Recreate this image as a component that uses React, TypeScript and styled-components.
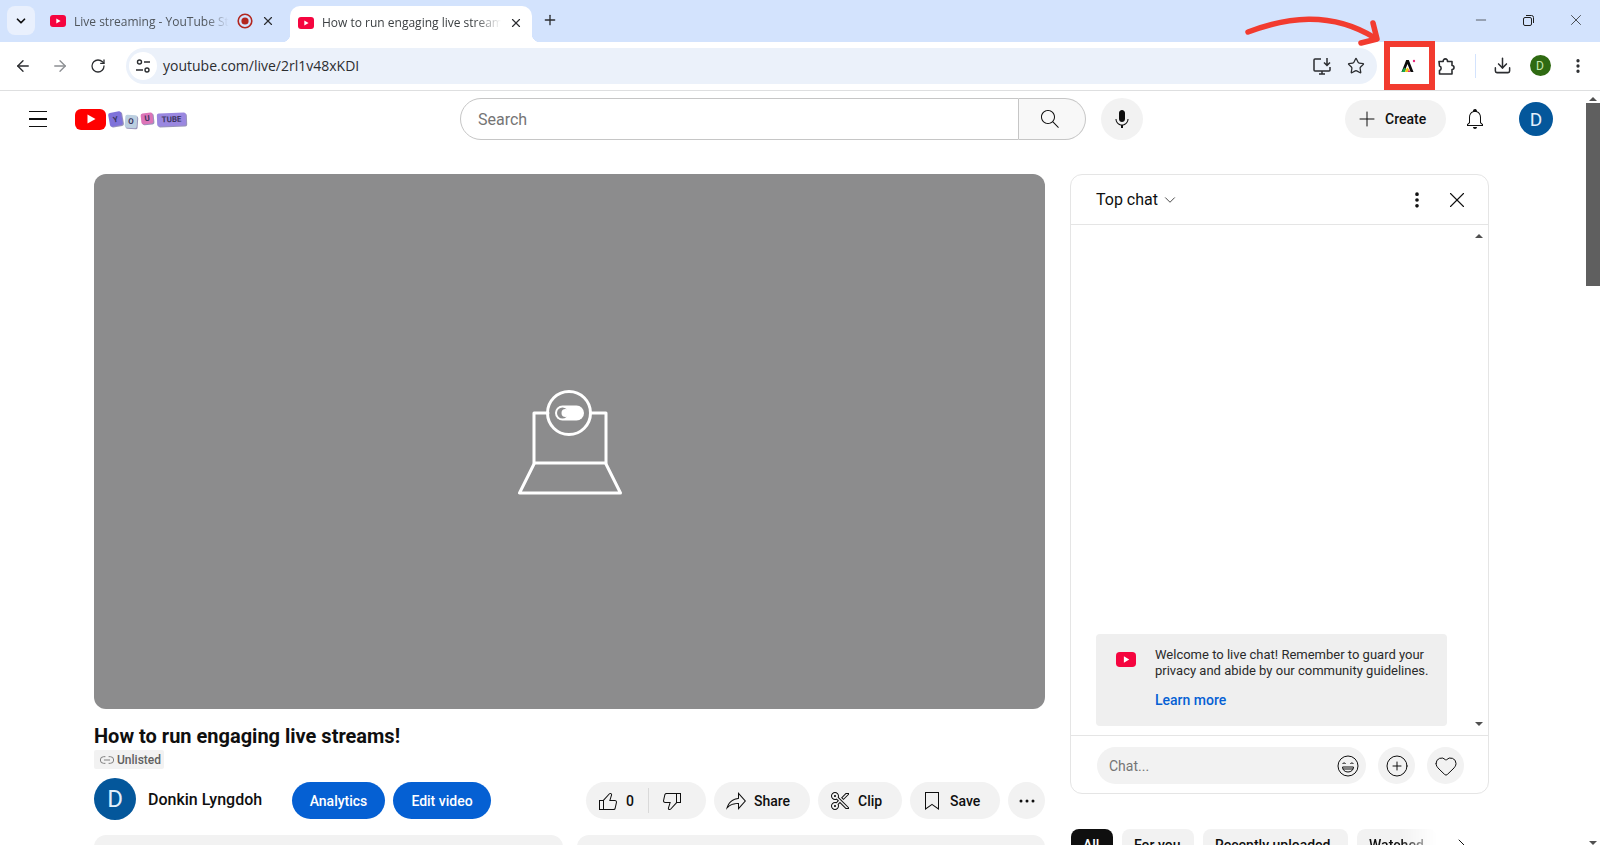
import styled, { createGlobalStyle } from "styled-components"
import {
  ArrowLeft,
  ArrowRight,
  ChevronDown,
  ChevronRight,
  CirclePlus,
  Download,
  EllipsisVertical,
  Heart,
  Link2,
  Minus,
  Plus,
  RotateCw,
  Star,
  X,
} from "lucide-react"

const GlobalStyle = createGlobalStyle`
  html, body {
    margin: 0;
    height: 100%;
    overflow: hidden;
    background: #fff;
  }
  * {
    box-sizing: border-box;
  }
`

const paths = {
  like: "M18.77,11h-4.23l1.52-4.94C16.38,5.03,15.54,4,14.38,4c-0.58,0-1.14,0.24-1.52,0.65L7,11H3v10h4h1h9.43 c1.06,0,1.98-0.67,2.19-1.61l1.34-6C21.23,12.15,20.18,11,18.77,11z M7,20H4v-8h3V20z M19.98,13.17l-1.34,6 C18.54,19.65,18.03,20,17.43,20H8v-8.61l5.6-6.06C13.79,5.12,14.08,5,14.38,5c0.26,0,0.5,0.11,0.63,0.3 c0.07,0.1,0.15,0.26,0.09,0.47l-1.52,4.94L13.18,12h1.35h4.23c0.41,0,0.8,0.17,1.03,0.46C19.92,12.61,20.05,12.86,19.98,13.17z",
  dislike:
    "M17,4h-1H6.57C5.5,4,4.59,4.67,4.38,5.61l-1.34,6C2.77,12.85,3.82,14,5.23,14h4.23l-1.52,4.94C7.62,19.97,8.46,21,9.62,21 c0.58,0,1.14-0.24,1.52-0.65L17,14h4V4H17z M10.4,19.67C10.21,19.88,9.92,20,9.62,20c-0.26,0-0.5-0.11-0.63-0.3 c-0.07-0.1-0.15-0.26-0.09-0.47l1.52-4.94l0.4-1.29H9.46H5.23c-0.41,0-0.8-0.17-1.03-0.46c-0.12-0.15-0.25-0.4-0.18-0.72l1.34-6 C5.46,5.35,5.97,5,6.57,5H16v8.61L10.4,19.67z M20,13h-3V5h3V13z",
  share:
    "M15 5.63 20.66 12 15 18.37V14h-1c-3.96 0-7.14 1-9.75 3.09 1.84-4.07 5.11-6.4 9.89-7.1l.86-.13V5.63M14 3v6C6.22 10.13 3.11 15.33 2 21c2.78-3.97 6.44-6 12-6v6l8-9-8-9z",
  bookmark: "M18 4v15.06l-5.42-3.87-.58-.42-.58.42L6 19.06V4h12m1-1H5v18l7-5 7 5V3z",
  clip: "M8 7c0-.55-.45-1-1-1s-1 .45-1 1 .45 1 1 1 1-.45 1-1zm-1 9c-.55 0-1 .45-1 1s.45 1 1 1 1-.45 1-1-.45-1-1-1zm3.79-7.77L21 18.44V20h-3.27l-5.76-5.76-1.27 1.27c.19.46.3.96.3 1.49 0 2.21-1.79 4-4 4s-4-1.79-4-4 1.79-4 4-4c.42 0 .81.08 1.19.2l1.37-1.37-1.11-1.11C8 10.89 7.51 11 7 11c-2.21 0-4-1.79-4-4s1.79-4 4-4 4 1.79 4 4c0 .43-.09.84-.21 1.23zm-.71.71-.43-.44.19-.58c.11-.34.16-.64.16-.92 0-1.65-1.35-3-3-3S4 5.35 4 7s1.35 3 3 3c.36 0 .73-.07 1.09-.21l.61-.24.46.46 1.11 1.11.71.71-.71.71-1.37 1.37-.43.43-.58-.18C7.55 14.05 7.27 14 7 14c-1.65 0-3 1.35-3 3s1.35 3 3 3 3-1.35 3-3c0-.38-.07-.75-.22-1.12l-.25-.61.47-.47 1.27-1.27.71-.71.71.71L18.15 19H20v-.15l-9.92-9.91zM17.73 4H21v1.56l-5.52 5.52-2.41-2.41L17.73 4zm.42 1-3.67 3.67 1 1L20 5.15V5h-1.85z",
  bell: "M10 20h4c0 1.1-.9 2-2 2s-2-.9-2-2zm10-2.65V19H4v-1.65l2-1.88v-5.15C6 7.4 7.56 5.1 10 4.34v-.38c0-1.42 1.49-2.5 2.99-1.76.65.32 1.01 1.03 1.01 1.76v.39c2.44.75 4 3.06 4 5.98v5.15l2 1.87zm-1 .42-2-1.88v-5.47c0-2.47-1.19-4.36-3.13-5.1-1.26-.53-2.64-.5-3.84.03C8.15 6.11 7 7.99 7 10.42v5.47l-2 1.88V18h14v-.23z",
  search:
    "M20.87 20.17l-5.59-5.59C16.35 13.35 17 11.75 17 10c0-3.87-3.13-7-7-7s-7 3.13-7 7 3.13 7 7 7c1.75 0 3.35-.65 4.58-1.71l5.59 5.59.7-.71zM10 16c-3.31 0-6-2.69-6-6s2.69-6 6-6 6 2.69 6 6-2.69 6-6 6z",
  mic: "M12 3C10.34 3 9 4.37 9 6.07V11.93C9 13.63 10.34 15 12 15C13.66 15 15 13.63 15 11.93V6.07C15 4.37 13.66 3 12 3ZM18.5 12H17.5C17.5 15.03 15.03 17.5 12 17.5C8.97 17.5 6.5 15.03 6.5 12H5.5C5.5 15.24 7.89 17.93 11 18.41V21H13V18.41C16.11 17.93 18.5 15.24 18.5 12Z",
}

const Screen = styled.div`
  position: relative;
  display: flex;
  flex-direction: column;
  width: 1600px;
  height: 845px;
  overflow: hidden;
  font-family: Roboto, "Liberation Sans", sans-serif;
  color: #0f0f0f;
`

/* ---------- browser chrome ---------- */

const TabStrip = styled.div`
  display: flex;
  flex: none;
  align-items: flex-end;
  height: 42px;
  padding-left: 7px;
  background: #d3e3fd;
  font-family: "Open Sans", "Liberation Sans", sans-serif;
  font-size: 12px;
`

const TabSearch = styled.div`
  display: flex;
  align-items: center;
  justify-content: center;
  align-self: flex-start;
  width: 28px;
  height: 29px;
  margin-top: 6px;
  margin-right: 7px;
  border-radius: 8px;
  background: #e9f0fd;
`

const Tab = styled.div<{ $active?: boolean }>`
  position: relative;
  display: flex;
  align-items: center;
  gap: 8px;
  width: 242px;
  height: 36px;
  margin-right: 6px;
  padding: 0 9px 6px 8px;
  border-radius: 10px 10px 0 0;
  background: ${(p) => (p.$active ? "#fff" : "transparent")};
  color: ${(p) => (p.$active ? "#3c4043" : "#50565c")};

  ${(p) =>
    p.$active &&
    `
    padding-bottom: 3px;
    &::before, &::after {
      content: "";
      position: absolute;
      bottom: 0;
      width: 8px;
      height: 8px;
    }
    &::before {
      left: -8px;
      background: radial-gradient(circle at 0 0, transparent 8px, #fff 8.5px);
    }
    &::after {
      right: -8px;
      background: radial-gradient(circle at 100% 0, transparent 8px, #fff 8.5px);
    }
  `}
`

const TabTitle = styled.span`
  flex: 1;
  min-width: 0;
  overflow: hidden;
  white-space: nowrap;
  -webkit-mask-image: linear-gradient(to right, #000 85%, transparent);
  mask-image: linear-gradient(to right, #000 85%, transparent);
`

const NewTab = styled.div`
  display: flex;
  align-self: center;
  margin-left: 4px;
  margin-top: -2px;
`

const WindowControls = styled.div`
  display: flex;
  align-self: flex-start;
  align-items: center;
  gap: 31px;
  height: 40px;
  margin-left: auto;
  padding-right: 15px;
`

const Toolbar = styled.div`
  display: flex;
  flex: none;
  align-items: center;
  height: 49px;
  padding: 0 4px 1px 5px;
  border-bottom: 1px solid #dedfe0;
  border-radius: 8px 8px 0 0;
  background: #fff;
`

const ToolButton = styled.div<{ $width?: number; $dim?: boolean }>`
  display: flex;
  flex: none;
  align-items: center;
  justify-content: center;
  width: ${(p) => p.$width ?? 36}px;
  height: 36px;
  color: ${(p) => (p.$dim ? "#8c8f93" : "#2b2d30")};
`

const Omnibox = styled.div`
  display: flex;
  flex: 1;
  align-items: center;
  height: 36px;
  margin: 0 13px 0 9px;
  padding: 0 4px 0 3px;
  border-radius: 18px;
  background: #ebf1fa;
`

const SiteChip = styled.div`
  display: flex;
  align-items: center;
  justify-content: center;
  width: 28px;
  height: 28px;
  border-radius: 50%;
  background: #fff;
`

const Url = styled.span`
  flex: 1;
  margin-left: 6px;
  font-family: "Open Sans", "Liberation Sans", sans-serif;
  font-size: 14px;
  color: #2b2d30;
`

const ToolDivider = styled.div`
  width: 1px;
  height: 24px;
  margin: 0 8px 0 9px;
  background: #d3e3fd;
`

const ProfileDot = styled.div`
  display: flex;
  align-items: center;
  justify-content: center;
  width: 21px;
  height: 21px;
  border-radius: 50%;
  background: #2f6a12;
  color: #c6e8b0;
  font-size: 12px;
`

/* ---------- annotation ---------- */

const Highlight = styled.div`
  position: absolute;
  top: 41px;
  left: 1384px;
  width: 51px;
  height: 49px;
  border: 6px solid #f23b2f;
  pointer-events: none;
`

const Pointer = styled.svg`
  position: absolute;
  top: 10px;
  left: 1240px;
  width: 145px;
  height: 40px;
`

/* ---------- page ---------- */

const Page = styled.div`
  display: flex;
  flex: 1;
  min-height: 0;
`

const PageContent = styled.div`
  display: flex;
  flex: 1;
  flex-direction: column;
  min-width: 0;
`

const PageScrollbar = styled.div`
  display: flex;
  flex: none;
  flex-direction: column;
  justify-content: space-between;
  align-items: center;
  width: 15px;
`

const ScrollThumb = styled.div`
  width: 14px;
  height: 183px;
  margin-top: 2px;
  margin-left: 1px;
  background: #5f5f5f;
`

const ScrollColumn = styled.div`
  display: flex;
  flex-direction: column;
  align-items: center;
`

const Arrow = styled.div<{ $down?: boolean }>`
  flex: none;
  width: 0;
  height: 0;
  margin-top: 6px;
  border-left: 4px solid transparent;
  border-right: 4px solid transparent;
  ${(p) => (p.$down ? "border-top" : "border-bottom")}: 4px solid #505050;
`

const Masthead = styled.header`
  display: flex;
  flex: none;
  align-items: center;
  height: 56px;
  padding-right: 32px;
`

const MastLeft = styled.div`
  display: flex;
  align-items: center;
  width: 460px;
  padding-left: 20px;
`

const Burger = styled.div`
  display: flex;
  flex-direction: column;
  gap: 6px;
  width: 36px;
  padding: 0 9px;

  span {
    height: 1.5px;
    background: #0f0f0f;
  }
`

const Logo = styled.div`
  display: flex;
  align-items: center;
  margin-left: 19px;
`

const PlayBadge = styled.div`
  display: flex;
  align-items: center;
  justify-content: center;
  width: 31px;
  height: 21px;
  margin-right: 3px;
  border-radius: 6px;
  background: #ff0000;
`

const Keycap = styled.span<{ $bg: string; $w: number; $h: number; $tilt: number; $gap: number; $shift: number }>`
  display: flex;
  align-items: center;
  justify-content: center;
  width: ${(p) => p.$w}px;
  height: ${(p) => p.$h}px;
  margin-right: ${(p) => p.$gap}px;
  border-radius: 2px;
  background: ${(p) => p.$bg};
  box-shadow: 1px 1px 0 rgba(70, 60, 130, 0.55);
  color: #3a3560;
  font-size: 8px;
  font-weight: 700;
  transform: translateY(${(p) => p.$shift}px) rotate(${(p) => p.$tilt}deg);
`

const SearchBox = styled.div`
  display: flex;
  align-items: center;
  width: 559px;
  height: 42px;
  padding-left: 17px;
  border: 1px solid #c6c6c6;
  border-radius: 21px 0 0 21px;
  font-size: 16px;
  color: #757575;
`

const SearchButton = styled.div`
  display: flex;
  align-items: center;
  justify-content: center;
  width: 67px;
  height: 42px;
  padding-right: 4px;
  border: 1px solid #c6c6c6;
  border-left: none;
  border-radius: 0 21px 21px 0;
  background: #f8f8f8;
`

const RoundButton = styled.div<{ $size: number; $left?: number }>`
  display: flex;
  flex: none;
  align-items: center;
  justify-content: center;
  width: ${(p) => p.$size}px;
  height: ${(p) => p.$size}px;
  margin-left: ${(p) => p.$left ?? 0}px;
  border-radius: 50%;
  background: #f2f2f2;
`

const MastRight = styled.div`
  display: flex;
  align-items: center;
  margin-left: auto;
`

const CreateButton = styled.div`
  display: flex;
  align-items: center;
  gap: 6px;
  width: 101px;
  height: 38px;
  padding-left: 10px;
  border-radius: 19px;
  background: #f2f2f2;
  font-size: 14px;
  font-weight: 500;
`

const BellButton = styled.div`
  display: flex;
  justify-content: center;
  width: 40px;
  margin: 0 24px 0 9px;
`

const Avatar = styled.div<{ $size: number; $font: number }>`
  display: flex;
  flex: none;
  align-items: center;
  justify-content: center;
  width: ${(p) => p.$size}px;
  height: ${(p) => p.$size}px;
  border-radius: 50%;
  background: #04579b;
  color: #e3f0fb;
  font-size: ${(p) => p.$font}px;
`

const Body = styled.div`
  display: flex;
  gap: 25px;
  padding: 27px 0 0 94px;
`

const Primary = styled.main`
  flex: none;
  width: 951px;
`

const Player = styled.div`
  display: flex;
  align-items: center;
  justify-content: center;
  height: 535px;
  border-radius: 12px;
  background: #8c8c8d;
`

const Title = styled.h1`
  margin: 13px 0 0;
  font-size: 20px;
  font-weight: 700;
  line-height: 28px;
`

const Badge = styled.div`
  display: inline-flex;
  align-items: center;
  gap: 2px;
  height: 19px;
  padding: 0 3px 0 5px;
  border-radius: 2px;
  background: #f2f2f2;
  color: #606060;
  font-size: 12px;
  font-weight: 500;
  vertical-align: top;
`

const OwnerRow = styled.div`
  display: flex;
  align-items: center;
  height: 42px;
  margin-top: 9px;
`

const OwnerName = styled.div`
  width: 144px;
  margin-left: 12px;
  font-size: 16px;
  font-weight: 500;
`

const OwnerButton = styled.div<{ $width: number }>`
  display: flex;
  align-items: center;
  justify-content: center;
  width: ${(p) => p.$width}px;
  height: 37px;
  margin-top: 3px;
  margin-right: 8px;
  border-radius: 19px;
  background: #0560d3;
  color: #fff;
  font-size: 14px;
  font-weight: 500;
`

const Actions = styled.div`
  display: flex;
  gap: 8px;
  margin-top: 3px;
  margin-left: auto;
`

const Pill = styled.div<{ $width: number }>`
  display: flex;
  align-items: center;
  gap: 6px;
  width: ${(p) => p.$width}px;
  height: 37px;
  padding-left: 10px;
  border-radius: 19px;
  background: #f2f2f2;
  font-size: 14px;
  font-weight: 500;
`

const LikeDivider = styled.div`
  width: 1px;
  height: 25px;
  margin: 0 5px 0 8px;
  background: #d9d9d9;
`

const Recommendations = styled.div`
  display: flex;
  gap: 14px;
  margin-top: 15px;
`

const RecCard = styled.div`
  flex: 1;
  height: 80px;
  border-radius: 12px;
  background: #f2f2f2;
`

const Secondary = styled.aside`
  flex: none;
  width: 419px;
`

const ChatPanel = styled.section`
  display: flex;
  flex-direction: column;
  height: 620px;
  border: 1px solid #e5e5e5;
  border-radius: 12px;
`

const ChatHeader = styled.div`
  display: flex;
  flex: none;
  align-items: center;
  height: 50px;
  padding: 0 18px 0 25px;
  border-bottom: 1px solid #e5e5e5;
  font-size: 16px;
`

const ChatMenu = styled.div`
  display: flex;
  margin-left: auto;
  margin-right: 17px;
`

const ChatBody = styled.div`
  display: flex;
  flex: 1;
  min-height: 0;
`

const ChatFeed = styled.div`
  display: flex;
  flex: 1;
  align-items: flex-end;
  padding: 0 0 9px 25px;
`

const ChatScroll = styled(ScrollColumn)`
  justify-content: space-between;
  width: 18px;
  padding: 3px 0 9px;
  margin-left: 20px;
`

const Welcome = styled.div`
  display: flex;
  width: 351px;
  height: 92px;
  padding: 13px 16px 0 20px;
  border-radius: 4px;
  background: #efefef;
  font-size: 13px;
  line-height: 16px;
  color: #2a2a2a;
`

const WelcomeIcon = styled.div`
  display: flex;
  flex: none;
  width: 39px;
  padding-top: 5px;
`

const LearnMore = styled.div`
  margin-top: 11px;
  color: #065fd4;
  font-size: 14px;
  font-weight: 500;
  line-height: 20px;
`

const ChatFooter = styled.div`
  display: flex;
  flex: none;
  gap: 12px;
  height: 58px;
  padding: 11px 0 0 26px;
  border-top: 1px solid #e5e5e5;
`

const ChatInput = styled.div`
  display: flex;
  align-items: center;
  justify-content: space-between;
  width: 269px;
  height: 37px;
  padding: 0 6px 0 12px;
  border-radius: 19px;
  background: #f2f2f2;
  color: #757575;
  font-size: 14px;
`

const ChipRow = styled.div`
  display: flex;
  align-items: flex-start;
  gap: 9px;
  margin-top: 35px;
  margin-left: 1px;
`

const Chip = styled.div<{ $active?: boolean; $fade?: boolean; $width: number }>`
  flex: none;
  width: ${(p) => p.$width}px;
  height: 32px;
  padding-left: 12px;
  border-radius: 8px;
  overflow: hidden;
  white-space: nowrap;
  background: ${(p) => (p.$active ? "#0f0f0f" : "#f2f2f2")};
  color: ${(p) => (p.$active ? "#fff" : "#0f0f0f")};
  font-size: 14px;
  font-weight: 500;
  line-height: 32px;
  ${(p) =>
    p.$fade &&
    `
    -webkit-mask-image: linear-gradient(to right, #000 55%, transparent);
    mask-image: linear-gradient(to right, #000 55%, transparent);
  `}
`

const ChipNext = styled.div`
  display: flex;
  margin-left: 4px;
  margin-top: 5px;
`

const Glyph = styled.svg<{ $size: number }>`
  display: block;
  flex: none;
  width: ${(p) => p.$size}px;
  height: ${(p) => p.$size}px;
  fill: currentColor;
`

const YtIcon = ({ d, size = 24 }: { d: string; size?: number }) => (
  <Glyph viewBox='0 0 24 24' $size={size}>
    <path d={d} />
  </Glyph>
)

const Favicon = () => (
  <svg width='16' height='12' viewBox='0 0 16 12'>
    <rect width='16' height='12' rx='3' fill='#f5053f' />
    <path d='M6.3 3.4v5.2L10.6 6z' fill='#fff' />
  </svg>
)

const RecordIcon = () => (
  <svg width='16' height='16' viewBox='0 0 16 16'>
    <circle cx='8' cy='8' r='6.8' fill='none' stroke='#b3261e' strokeWidth='1.6' />
    <circle cx='8' cy='8' r='3.6' fill='#b3261e' />
  </svg>
)

const SiteIcon = () => (
  <svg width='16' height='16' viewBox='0 0 16 16' fill='none' stroke='#2b2d30' strokeWidth='1.4'>
    <circle cx='4.5' cy='4' r='2' />
    <path d='M9 4h6M1 12h7' />
    <circle cx='12' cy='12' r='2' />
  </svg>
)

const InstallIcon = () => (
  <svg width='20' height='20' viewBox='0 0 20 20' fill='none' stroke='#2b2d30' strokeWidth='1.5'>
    <path d='M9 3H3a1 1 0 0 0-1 1v10a1 1 0 0 0 1 1h14a1 1 0 0 0 1-1v-3' />
    <path d='M7 18h6M10 15v3M15 2v7M12 6.5 15 9.5 18 6.5' />
  </svg>
)

const PuzzleIcon = () => (
  <svg width='20' height='20' viewBox='0 0 20 20' fill='none' stroke='#2b2d30' strokeWidth='1.6' strokeLinejoin='round'>
    <path d='M3 5.5h4.2a2.2 2.2 0 1 1 4.3 0H16v4a2 2 0 1 1 0 4V18H3.5v-3.6a2.3 2.3 0 0 0 0-4.4z' />
  </svg>
)

const ExtensionMark = () => (
  <svg width='16' height='14' viewBox='0 0 16 14'>
    <path d='M6.2 1h2.6L13.5 13H10.6L7.5 5 4.4 13H1.5z' fill='#0b0b0b' />
    <path d='M4.3 8.6 6 10.2 5 13H1.5z' fill='#18a84b' />
    <path d='M6 10.2 7.6 8.4 9 10.4 7.6 13H5z' fill='#f4c20d' />
    <path d='M9 10.4 10.3 13H7.6z' fill='#e5265a' />
    <circle cx='14' cy='2' r='1.2' fill='#e8287a' />
  </svg>
)

const CameraIllustration = () => (
  <svg width='104' height='106' viewBox='0 0 104 106' fill='none' stroke='#fff' strokeWidth='3' strokeLinejoin='round' strokeLinecap='round'>
    <circle cx='51' cy='24' r='21.5' />
    <path d='M30 24H16V74H88V24H73' />
    <path d='M16 75 1.5 104H102.5L88 75' />
    <rect x='37' y='16.5' width='29' height='15' rx='7.5' fill='#fff' stroke='none' />
    <circle cx='44.5' cy='24' r='5.5' fill='#8c8c8d' stroke='none' />
    <circle cx='47.5' cy='24' r='4' fill='#fff' stroke='none' />
  </svg>
)

const EmojiIcon = () => (
  <svg width='24' height='24' viewBox='0 0 24 24' fill='none' stroke='#0f0f0f' strokeWidth='1'>
    <circle cx='12' cy='12' r='10' />
    <path d='M6.5 10c.6-1.4 2.6-1.4 3.2 0M14.3 10c.6-1.4 2.6-1.4 3.2 0' />
    <path d='M6.5 13h11c0 3-2.400 5-5.500 5s-5.500-2-5.500-5zM7 15h10' />
  </svg>
)

const keycaps = [
  { label: "Y", bg: "#7f72da", w: 13, h: 14, tilt: -10, gap: 3, shift: 0 },
  { label: "O", bg: "#bccfe0", w: 12, h: 13, tilt: 4, gap: 4, shift: 2 },
  { label: "U", bg: "#dc74b8", w: 12, h: 11, tilt: -6, gap: 4, shift: -1 },
  { label: "TUBE", bg: "#9a87e0", w: 29, h: 13, tilt: -2, gap: 0, shift: 0 },
]

const App = () => {
  return (
    <Screen>
      <GlobalStyle />

      <TabStrip>
        <TabSearch>
          <ChevronDown size={14} strokeWidth={3} />
        </TabSearch>
        <Tab>
          <Favicon />
          <TabTitle>Live streaming - YouTube Studio</TabTitle>
          <RecordIcon />
          <X size={14} strokeWidth={2} color='#2b2d30' />
        </Tab>
        <Tab $active>
          <Favicon />
          <TabTitle>How to run engaging live stream</TabTitle>
          <X size={14} strokeWidth={2} color='#2b2d30' />
        </Tab>
        <NewTab>
          <Plus size={16} strokeWidth={2} color='#2b2d30' />
        </NewTab>
        <WindowControls>
          <Minus size={16} strokeWidth={1} color='#1f1f1f' />
          <svg width='16' height='16' viewBox='0 0 16 16' fill='none' stroke='#1f1f1f'>
            <rect x='3.500' y='5.500' width='8' height='8' rx='1.500' />
            <path d='M6 3.500h5.500a2 2 0 0 1 2 2V11' />
          </svg>
          <X size={18} strokeWidth={1} color='#1f1f1f' />
        </WindowControls>
      </TabStrip>

      <Toolbar>
        <ToolButton>
          <ArrowLeft size={18} strokeWidth={1.8} />
        </ToolButton>
        <ToolButton $width={37} $dim>
          <ArrowRight size={18} strokeWidth={1.8} />
        </ToolButton>
        <ToolButton $width={39}>
          <RotateCw size={16} strokeWidth={1.9} />
        </ToolButton>
        <Omnibox>
          <SiteChip>
            <SiteIcon />
          </SiteChip>
          <Url>youtube.com/live/2rl1v48xKDI</Url>
          <ToolButton $width={34}>
            <InstallIcon />
          </ToolButton>
          <ToolButton $width={34}>
            <Star size={18} strokeWidth={1.7} />
          </ToolButton>
        </Omnibox>
        <ToolButton>
          <ExtensionMark />
        </ToolButton>
        <ToolButton $width={40}>
          <PuzzleIcon />
        </ToolButton>
        <ToolDivider />
        <ToolButton>
          <Download size={19} strokeWidth={1.9} />
        </ToolButton>
        <ToolButton $width={40}>
          <ProfileDot>D</ProfileDot>
        </ToolButton>
        <ToolButton>
          <EllipsisVertical size={18} strokeWidth={2.4} />
        </ToolButton>
      </Toolbar>

      <Page>
        <PageContent>
          <Masthead>
            <MastLeft>
              <Burger>
                <span />
                <span />
                <span />
              </Burger>
              <Logo>
                <PlayBadge>
                  <svg width='10' height='10' viewBox='0 0 10 10'>
                    <path d='M1.500 0.500v9L9.500 5z' fill='#fff' />
                  </svg>
                </PlayBadge>
                {keycaps.map((cap) => (
                  <Keycap key={cap.label} $bg={cap.bg} $w={cap.w} $h={cap.h} $tilt={cap.tilt} $gap={cap.gap} $shift={cap.shift}>
                    {cap.label}
                  </Keycap>
                ))}
              </Logo>
            </MastLeft>
            <SearchBox>Search</SearchBox>
            <SearchButton>
              <YtIcon d={paths.search} />
            </SearchButton>
            <RoundButton $size={42} $left={15}>
              <YtIcon d={paths.mic} />
            </RoundButton>
            <MastRight>
              <CreateButton>
                <Plus size={24} strokeWidth={1} />
                Create
              </CreateButton>
              <BellButton>
                <YtIcon d={paths.bell} />
              </BellButton>
              <Avatar $size={34} $font={19}>
                D
              </Avatar>
            </MastRight>
          </Masthead>

          <Body>
            <Primary>
              <Player>
                <CameraIllustration />
              </Player>
              <Title>How to run engaging live streams!</Title>
              <Badge>
                <Link2 size={16} strokeWidth={1.5} color='#808080' />
                Unlisted
              </Badge>
              <OwnerRow>
                <Avatar $size={42} $font={24}>
                  D
                </Avatar>
                <OwnerName>Donkin Lyngdoh</OwnerName>
                <OwnerButton $width={93}>Analytics</OwnerButton>
                <OwnerButton $width={98}>Edit video</OwnerButton>
                <Actions>
                  <Pill $width={120}>
                    <YtIcon d={paths.like} />
                    0
                    <LikeDivider />
                    <YtIcon d={paths.dislike} />
                  </Pill>
                  <Pill $width={96}>
                    <YtIcon d={paths.share} />
                    Share
                  </Pill>
                  <Pill $width={84}>
                    <YtIcon d={paths.clip} />
                    Clip
                  </Pill>
                  <Pill $width={90}>
                    <YtIcon d={paths.bookmark} />
                    Save
                  </Pill>
                  <RoundButton $size={37}>
                    <svg width='24' height='24' viewBox='0 0 24 24' fill='#0f0f0f'>
                      <circle cx='6' cy='12' r='1.500' />
                      <circle cx='12' cy='12' r='1.500' />
                      <circle cx='18' cy='12' r='1.500' />
                    </svg>
                  </RoundButton>
                </Actions>
              </OwnerRow>
              <Recommendations>
                <RecCard />
                <RecCard />
              </Recommendations>
            </Primary>

            <Secondary>
              <ChatPanel>
                <ChatHeader>
                  Top chat
                  <ChevronDown size={18} strokeWidth={1} style={{ marginLeft: 3 }} />
                  <ChatMenu>
                    <EllipsisVertical size={20} strokeWidth={2.400} />
                  </ChatMenu>
                  <X size={26} strokeWidth={1} />
                </ChatHeader>
                <ChatBody>
                  <ChatFeed>
                    <Welcome>
                      <WelcomeIcon>
                        <svg width='20' height='15' viewBox='0 0 16 12'>
                          <rect width='16' height='12' rx='3' fill='#f5053f' />
                          <path d='M6.300 3.400v5.200L10.600 6z' fill='#fff' />
                        </svg>
                      </WelcomeIcon>
                      <div>
                        Welcome to live chat! Remember to guard your privacy and abide by our community guidelines.
                        <LearnMore>Learn more</LearnMore>
                      </div>
                    </Welcome>
                  </ChatFeed>
                  <ChatScroll>
                    <Arrow />
                    <Arrow $down />
                  </ChatScroll>
                </ChatBody>
                <ChatFooter>
                  <ChatInput>
                    Chat...
                    <EmojiIcon />
                  </ChatInput>
                  <RoundButton $size={37}>
                    <CirclePlus size={24} strokeWidth={1} />
                  </RoundButton>
                  <RoundButton $size={37}>
                    <Heart size={24} strokeWidth={1} />
                  </RoundButton>
                </ChatFooter>
              </ChatPanel>
              <ChipRow>
                <Chip $active $width={42}>All</Chip>
                <Chip $width={72}>For you</Chip>
                <Chip $width={145}>Recently uploaded</Chip>
                <Chip $fade $width={80}>Watched</Chip>
                <ChipNext>
                  <ChevronRight size={24} strokeWidth={1} />
                </ChipNext>
              </ChipRow>
            </Secondary>
          </Body>
        </PageContent>

        <PageScrollbar>
          <ScrollColumn>
            <Arrow />
            <ScrollThumb />
          </ScrollColumn>
          <Arrow $down />
        </PageScrollbar>
      </Page>

      <Highlight />
      <Pointer viewBox='0 0 145 40' fill='none' stroke='#f23b2f' strokeWidth='5.500' strokeLinecap='round' strokeLinejoin='round'>
        <path d='M8 22C45 8 90 0 135 28' />
        <path d='M133 13 137 29 121 33' />
      </Pointer>
    </Screen>
  )
}

export default App
